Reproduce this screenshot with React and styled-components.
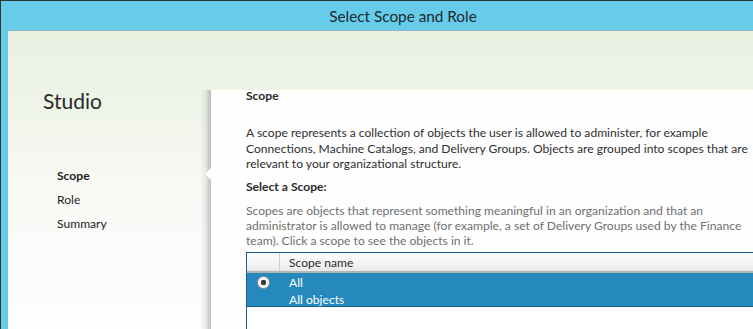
import React from "react";
import styled, { createGlobalStyle } from "styled-components";

const Global = createGlobalStyle`
  html, body { margin: 0; padding: 0; overflow: hidden; background: #66cbea; }
  * { box-sizing: border-box; }
`;

const FONT = `Lato, "Open Sans", "Liberation Sans", sans-serif`;
const TEXT = "12.1px";

const Window = styled.div`
  width: 753px;
  height: 329px;
  display: flex;
  flex-direction: column;
  background: #67cbea;
  border-top: 1px solid #2e3438;
  border-left: 1px solid #2e3438;
  font-family: ${FONT};
  overflow: hidden;
`;

const TitleBar = styled.div`
  height: 29px;
  flex: none;
  display: flex;
  align-items: center;
  justify-content: center;
  padding: 1px 0 0 52px;
  font-size: 15.3px;
  color: #1c2a30;
`;

const Body = styled.div`
  flex: 1;
  margin-left: 7px;
  display: flex;
  min-height: 0;
  border-top: 1px solid #8fb4c4;
  background: linear-gradient(180deg, #eaf1e1 0%, #eff4e8 25%, #f9faf6 55%, #fdfdfd 100%);
`;

const Sidebar = styled.div`
  width: 203px;
  flex: none;
  padding: 58px 0 0 35px;
  display: flex;
  flex-direction: column;
`;

const Brand = styled.div`
  font-size: 21px;
  color: #2b2b2b;
  line-height: 24px;
  margin-bottom: 55px;
`;

const NavList = styled.div`
  display: flex;
  flex-direction: column;
  padding-left: 14px;
  gap: 8px;
`;

const NavItem = styled.div`
  font-size: ${TEXT};
  line-height: 16px;
  color: #1e1e1e;
  font-weight: ${(p) => (p.$active ? 700 : 400)};
`;

const Panel = styled.div`
  flex: 1;
  margin-top: 59px;
  position: relative;
  background: #fefefe;
  padding: 0 0 0 35px;
  &::before {
    content: "";
    position: absolute;
    left: -11px;
    top: 0;
    bottom: 0;
    width: 11px;
    background: linear-gradient(90deg, rgba(255,255,255,0) 0%, rgba(200,202,206,0.35) 50%, rgba(160,163,168,0.7) 100%);
  }
  &::after {
    content: "";
    position: absolute;
    left: -6px;
    top: 78px;
    width: 0;
    height: 0;
    border-top: 6px solid transparent;
    border-bottom: 6px solid transparent;
    border-right: 6px solid #fefefe;
  }
`;

const Heading = styled.div`
  font-size: ${TEXT};
  font-weight: 700;
  color: #2a2a2a;
  line-height: 16px;
  margin-top: -2px;
  margin-bottom: 21px;
`;

const Para = styled.p`
  margin: 0;
  font-size: ${TEXT};
  line-height: ${(p) => (p.$muted ? "15px" : "15.5px")};
  color: ${(p) => (p.$muted ? "#6f6f6f" : "#2e2e2e")};
  white-space: nowrap;
`;

const SubHeading = styled.div`
  font-size: ${TEXT};
  font-weight: 700;
  color: #2a2a2a;
  line-height: 16px;
  margin: 7.5px 0 7.5px;
`;

const Table = styled.div`
  margin-top: 4.5px;
  width: 600px;
  border: 1px solid #1b5c9c;
  border-right: none;
  background: #fff;
  height: 120px;
`;

const HeaderRow = styled.div`
  display: flex;
  height: 20px;
  background: linear-gradient(180deg, #ffffff 0%, #f3f3f3 60%, #e8e8e8 100%);
  border-bottom: 2px solid #b4b4b4;
`;

const HeaderCell = styled.div`
  width: ${(p) => p.$w || "auto"};
  flex: ${(p) => (p.$w ? "none" : 1)};
  border-right: ${(p) => (p.$sep ? "1px solid #cfcfcf" : "none")};
  padding-left: 9px;
  font-size: ${TEXT};
  line-height: 20px;
  color: #2a2a2a;
`;

const Row = styled.div`
  display: flex;
  height: 34px;
  background: #2589bd;
  border-bottom: 1px solid #1d5f98;
  color: #fff;
`;

const RadioCell = styled.div`
  width: 33px;
  flex: none;
  display: flex;
  justify-content: center;
  padding-top: 3px;
`;

const Radio = styled.span`
  width: 13px;
  height: 13px;
  border-radius: 50%;
  background: radial-gradient(circle, #3a3a3a 0 2.6px, #f4f4f4 3px 100%);
  border: 1px solid #9a9a9a;
`;

const RowText = styled.div`
  padding-left: 9px;
  font-size: ${TEXT};
  line-height: 16.5px;
  padding-top: 2px;
`;

export default function App() {
  return (
    <>
      <Global />
      <Window>
        <TitleBar>Select Scope and Role</TitleBar>
        <Body>
          <Sidebar>
            <Brand>Studio</Brand>
            <NavList>
              <NavItem $active>Scope</NavItem>
              <NavItem>Role</NavItem>
              <NavItem>Summary</NavItem>
            </NavList>
          </Sidebar>
          <Panel>
            <Heading>Scope</Heading>
            <Para>
              A scope represents a collection of objects the user is allowed to administer, for example
              <br />
              Connections, Machine Catalogs, and Delivery Groups. Objects are grouped into scopes that are
              <br />
              relevant to your organizational structure.
            </Para>
            <SubHeading>Select a Scope:</SubHeading>
            <Para $muted>
              Scopes are objects that represent something meaningful in an organization and that an
              <br />
              administrator is allowed to manage (for example, a set of Delivery Groups used by the Finance
              <br />
              team). Click a scope to see the objects in it.
            </Para>
            <Table>
              <HeaderRow>
                <HeaderCell $w="33px" $sep />
                <HeaderCell>Scope name</HeaderCell>
              </HeaderRow>
              <Row>
                <RadioCell>
                  <Radio />
                </RadioCell>
                <RowText>
                  All
                  <br />
                  All objects
                </RowText>
              </Row>
            </Table>
          </Panel>
        </Body>
      </Window>
    </>
  );
}
